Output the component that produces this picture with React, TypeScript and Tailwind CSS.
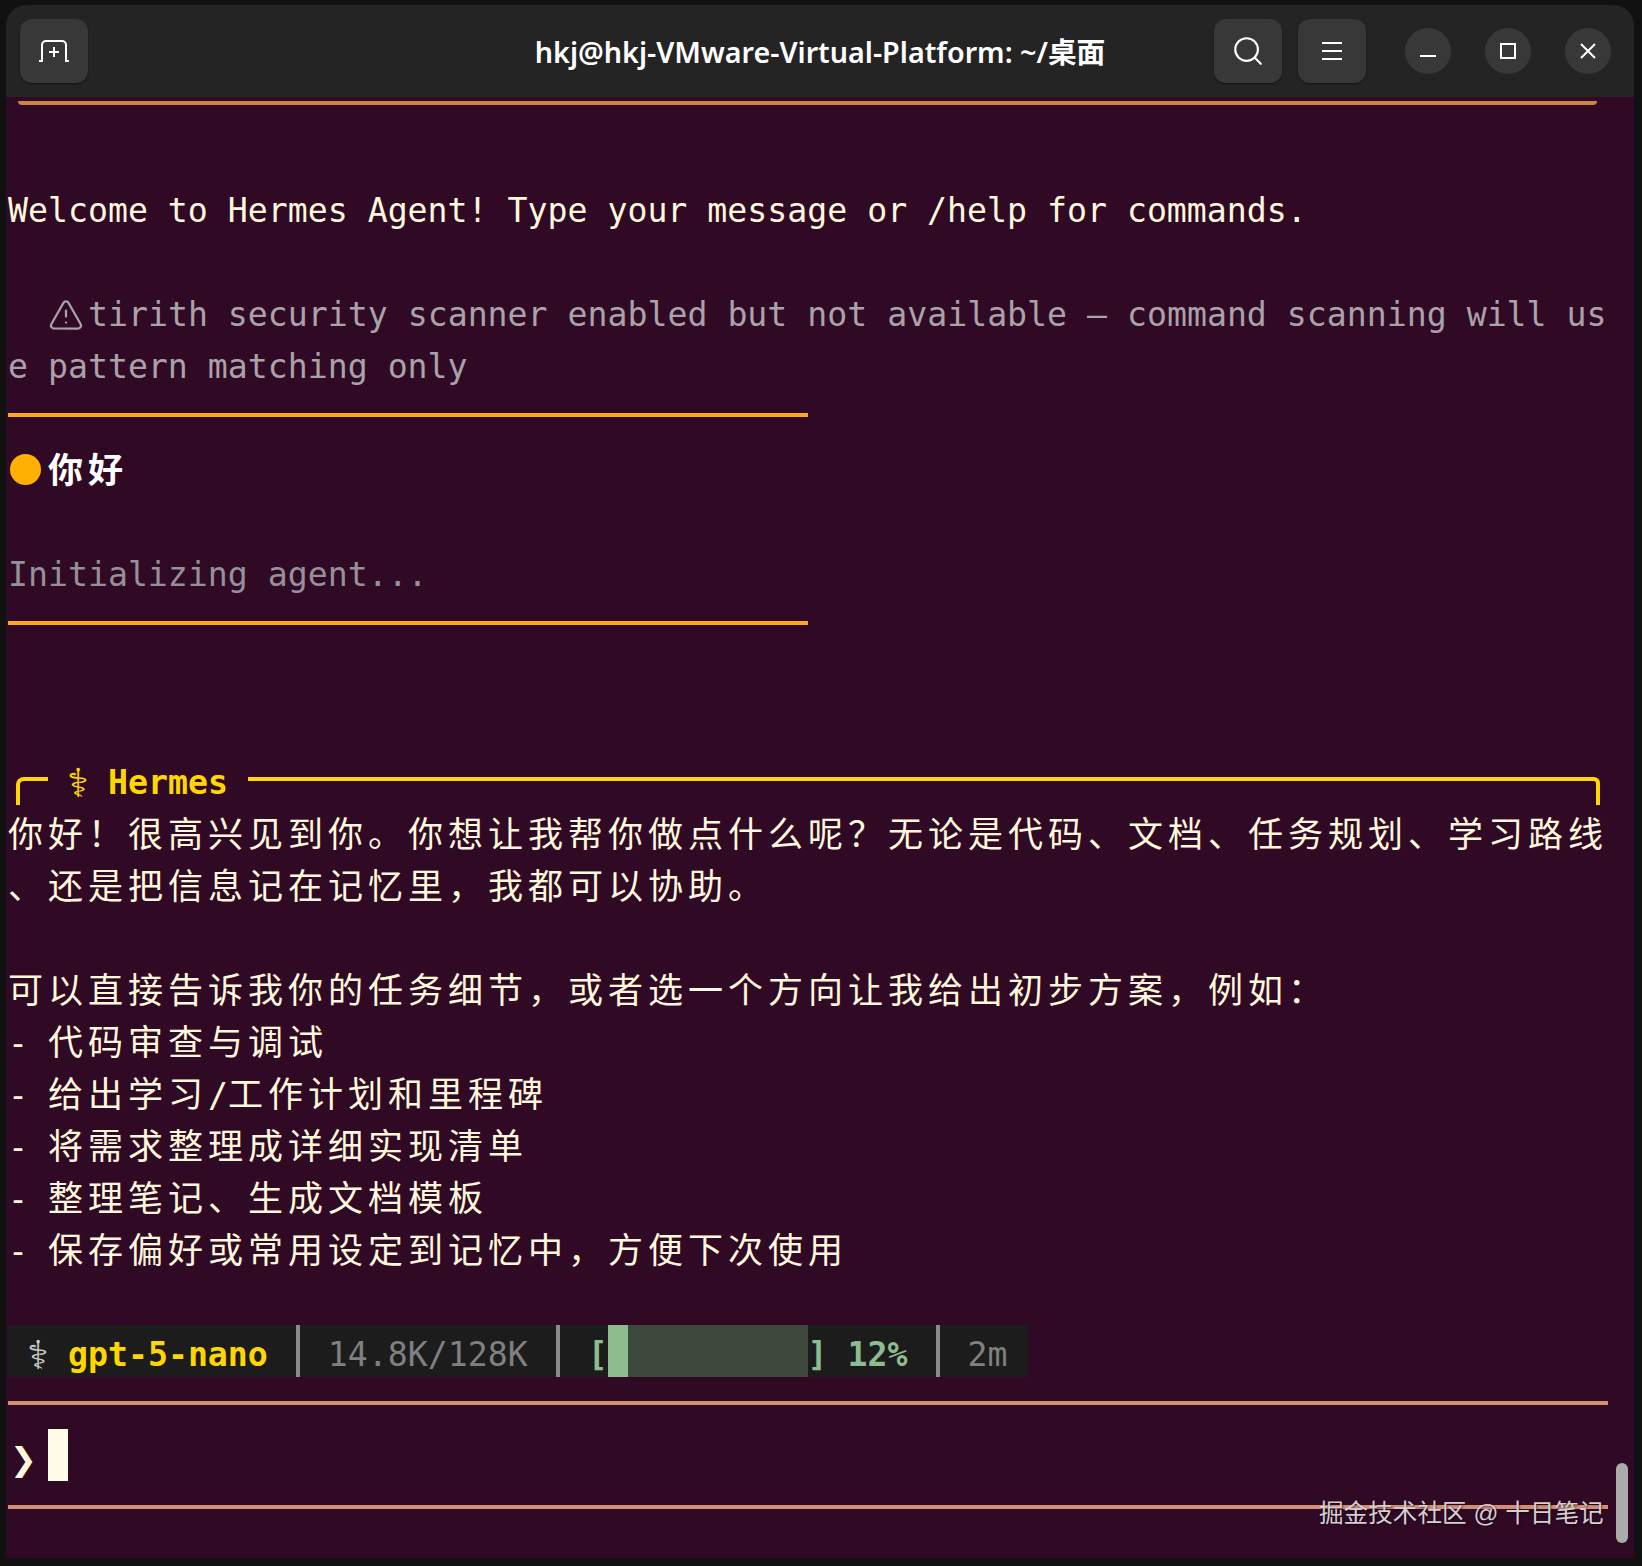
import { Search, TriangleAlert } from 'lucide-react'

const MONO = "font-['DejaVu_Sans_Mono','Noto_Sans_CJK_SC',monospace]"

const reply = [
  '你好！很高兴见到你。你想让我帮你做点什么呢？无论是代码、文档、任务规划、学习路线',
  '、还是把信息记在记忆里，我都可以协助。',
  '',
  '可以直接告诉我你的任务细节，或者选一个方向让我给出初步方案，例如：',
  '- 代码审查与调试',
  '- 给出学习/工作计划和里程碑',
  '- 将需求整理成详细实现清单',
  '- 整理笔记、生成文档模板',
  '- 保存偏好或常用设定到记忆中，方便下次使用',
]

// wide chars take two terminal cells, so CJK runs get tracked out to 40px
function Cells({ text }: { text: string }): React.JSX.Element {
  const runs = text.split(/([\u3000-\u9fff\uff00-\uffef]+)/)
  return (
    <>
      {runs.map((run, i) =>
        i % 2 === 1 ? (
          <span key={i} className="text-[35px] tracking-[5px]">
            {run}
          </span>
        ) : (
          <span key={i}>{run}</span>
        )
      )}
    </>
  )
}

function Row({ children, className = '' }: { children?: React.ReactNode; className?: string }): React.JSX.Element {
  return <div className={`h-[52px] whitespace-pre ${className}`}>{children}</div>
}

function Rule({ width, color }: { width: string; color: string }): React.JSX.Element {
  return (
    <div className="h-[52px] pt-6">
      <div className={`h-1 ${width} ${color}`} />
    </div>
  )
}

function Bar(): React.JSX.Element {
  return (
    <span className="flex h-[52px] w-5 justify-center">
      <span className="h-full w-1 bg-[#8a8a8a]" />
    </span>
  )
}

function TitleButton({ children }: { children: React.ReactNode }): React.JSX.Element {
  return (
    <button className="flex h-16 w-[68px] items-center justify-center rounded-xl bg-[#383838] text-white shadow-[0_1px_2px_rgba(0,0,0,0.5)]">
      {children}
    </button>
  )
}

function WindowButton({ children }: { children: React.ReactNode }): React.JSX.Element {
  return (
    <button className="flex h-[46px] w-[46px] items-center justify-center rounded-full bg-[#383838] text-white">
      {children}
    </button>
  )
}

function TitleBar(): React.JSX.Element {
  return (
    <header className="grid h-[92px] grid-cols-[1fr_auto_1fr] items-center rounded-t-[20px] bg-[#242424]">
      <div className="pl-[14px]">
        <TitleButton>
          <svg width="32" height="24" viewBox="0 0 32 24" fill="none" stroke="currentColor" strokeWidth="2">
            <path d="M1 22h3V6a4 4 0 0 1 4-4h16a4 4 0 0 1 4 4v16h3" />
            <path d="M16 8v10M11 13h10" />
          </svg>
        </TitleButton>
      </div>
      <h1 className="pt-[2px] font-['Noto_Sans','Noto_Sans_CJK_SC',sans-serif] text-[28.7px] font-semibold text-white">
        hkj@hkj-VMware-Virtual-Platform: ~/桌面
      </h1>
      <div className="flex items-center justify-end gap-4 pr-[23px]">
        <TitleButton>
          <Search size={34} strokeWidth={1.5} />
        </TitleButton>
        <TitleButton>
          <svg width="22" height="20" viewBox="0 0 22 20" stroke="currentColor" strokeWidth="2">
            <path d="M1 2h20M1 10h20M1 18h20" />
          </svg>
        </TitleButton>
        <div className="ml-[23px] flex items-center gap-[34px]">
          <WindowButton>
            <svg width="18" height="18" viewBox="0 0 18 18" stroke="currentColor" strokeWidth="2">
              <path d="M1 14h16" />
            </svg>
          </WindowButton>
          <WindowButton>
            <svg width="18" height="18" viewBox="0 0 18 18" fill="none" stroke="currentColor" strokeWidth="2">
              <rect x="2" y="2" width="14" height="14" />
            </svg>
          </WindowButton>
          <WindowButton>
            <svg width="18" height="18" viewBox="0 0 18 18" stroke="currentColor" strokeWidth="2">
              <path d="M2 2l14 14M16 2L2 16" />
            </svg>
          </WindowButton>
        </div>
      </div>
    </header>
  )
}

function Caduceus({ className }: { className: string }): React.JSX.Element {
  return (
    <span className={`flex w-5 justify-center font-['DejaVu_Sans',monospace] text-[40px] font-normal ${className}`}>
      ⚕
    </span>
  )
}

function HermesHeader(): React.JSX.Element {
  return (
    <div className="flex h-[52px] w-[1592px] text-[#ffd700]">
      <div className="ml-2 mt-6 h-7 w-8 rounded-tl-lg border-l-4 border-t-4 border-[#ffd700]" />
      <Caduceus className="ml-5" />
      <span className="ml-5 font-bold">Hermes</span>
      <div className="ml-5 mt-6 h-7 flex-1 rounded-tr-md border-r-4 border-t-4 border-[#ffd700]" />
    </div>
  )
}

function StatusLine(): React.JSX.Element {
  return (
    <div className="flex h-[52px] w-[1020px] whitespace-pre bg-[#1c1c1c]">
      <Caduceus className="ml-5 text-[#c8c8c8]" />
      <span className="ml-5 font-bold text-[#ffd700]">gpt-5-nano</span>
      <span className="ml-5"><Bar /></span>
      <span className="ml-5 text-[#808080]">14.8K/128K</span>
      <span className="ml-5"><Bar /></span>
      <span className="ml-5 font-bold text-[#8fbc8f]">[</span>
      <span className="h-full w-5 bg-[#8fbc8f]" />
      <span className="h-full w-[180px] bg-[#3c483c]" />
      <span className="font-bold text-[#8fbc8f]">]</span>
      <span className="ml-5 font-bold text-[#8fbc8f]">12%</span>
      <span className="ml-5"><Bar /></span>
      <span className="ml-5 text-[#808080]">2m</span>
    </div>
  )
}

export default function App(): React.JSX.Element {
  return (
    <div className="h-[1566px] bg-[#111111] pb-2 pl-[6px] pr-2 pt-[5px]">
      <div className="relative flex h-full flex-col overflow-hidden rounded-t-[20px] bg-[#300a24]">
        <TitleBar />
        {/* line box is taller than the row: sits the glyphs where the terminal draws them */}
        <main className={`pl-[2px] text-[33.2px] leading-[60px] text-[#fff8dc] ${MONO}`}>
          {/* first row is cut off by the title bar */}
          <div className="h-8 pt-1">
            <div className="ml-[10px] h-1 w-[1579px] rounded-b bg-[#cd853f]" />
          </div>
          <Row />
          <Row>
            <Cells text="Welcome to Hermes Agent! Type your message or /help for commands." />
          </Row>
          <Row />
          <Row className="flex text-[#aaa2aa]">
            <span className="ml-10 flex h-[60px] w-10 items-center">
              <TriangleAlert size={36} strokeWidth={1.5} />
            </span>
            tirith security scanner enabled but not available — command scanning will us
          </Row>
          <Row className="text-[#aaa2aa]">e pattern matching only</Row>
          <Rule width="w-[800px]" color="bg-[#ffa914]" />
          <Row className="flex">
            <span className="ml-[2px] mt-[13px] h-[31px] w-[31px] rounded-full bg-[#ffb000]" />
            <span className="ml-[7px] font-bold text-white">
              <Cells text="你好" />
            </span>
          </Row>
          <Row />
          <Row className="text-[#96909a]">Initializing agent...</Row>
          <Rule width="w-[800px]" color="bg-[#ffa914]" />
          <Row />
          <Row />
          <HermesHeader />
          {reply.map((line, i) => (
            <Row key={i}>
              <Cells text={line} />
            </Row>
          ))}
          <Row />
          <StatusLine />
          <Rule width="w-[1600px]" color="bg-[#d28f72]" />
          <Row className="flex">
            <span className="ml-[2px] w-[38px] font-['DejaVu_Sans',monospace] text-[32px]">❯</span>
            <span className="h-full w-5 bg-[#fffde7]" />
          </Row>
          <Rule width="w-[1600px]" color="bg-[#d28f72]" />
        </main>
        <div className="absolute left-[1313px] top-[1491px] font-['Liberation_Sans','Noto_Sans_CJK_SC',sans-serif] text-[24.6px] leading-9 text-[#d6ced4] [text-shadow:1px_1px_2px_rgba(0,0,0,0.6)]">
          掘金技术社区 @ 十日笔记
        </div>
        <div className="absolute left-[1610px] top-[1458px] h-20 w-3 rounded-full bg-[#ababab]" />
      </div>
    </div>
  )
}
